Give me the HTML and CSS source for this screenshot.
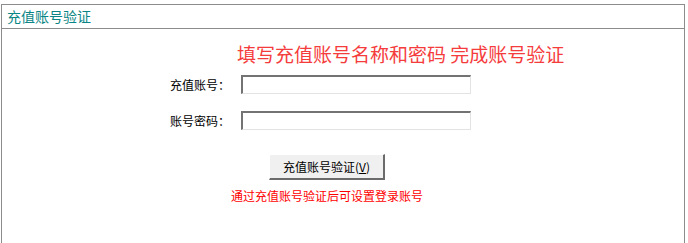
FILE: index.html
```html
<!DOCTYPE html>
<html>
<head>
  <meta charset="utf-8">
  <title>充值账号验证</title>
  <link rel="stylesheet" href="styles.css">
</head>
<body>

<div class="panel">
  <div class="panel-title">充值账号验证</div>
  <div class="panel-body">
    <h2 class="tip">填写充值账号名称和密码 完成账号验证</h2>

    <form class="verify-form" onsubmit="return false;">
      <div class="form-row">
        <label for="account">充值账号：</label>
        <input type="text" id="account">
      </div>
      <div class="form-row second">
        <label for="password">账号密码：</label>
        <input type="password" id="password">
      </div>
      <div class="actions">
        <button type="submit" accesskey="v">充值账号验证(<u>V</u>)</button>
      </div>
      <p class="note">通过充值账号验证后可设置登录账号</p>
    </form>
  </div>
</div>

</body>
</html>
```

FILE: styles.css
```css
body {
  margin: 0;
  background-color: #fff;
  font-family: "Noto Sans CJK SC", "Noto Sans", sans-serif;
  font-size: 12px;
}

.panel {
  margin: 4px 0 0 1px;
  width: 684px;
  height: 239px;
  box-sizing: border-box;
  border: 1px solid #8c8c8c;
  border-bottom: none;
}

.panel-title {
  height: 23px;
  line-height: 22px;
  padding-left: 5px;
  font-size: 14px;
  color: #0a8585;
  border-bottom: 1px solid #8c8c8c;
}

.panel-body {
  padding-top: 13px;
}

.tip {
  margin: 0 0 9px 235px;
  font-size: 19px;
  font-weight: normal;
  line-height: 24px;
  color: #f53c3c;
}

.form-row {
  display: flex;
  align-items: center;
  height: 19px;
}

.form-row.second {
  margin-top: 17px;
}

.form-row label {
  width: 228px;
  margin-right: 11px;
  text-align: right;
  color: #000;
}

.form-row input {
  width: 230px;
  height: 19px;
  box-sizing: border-box;
  padding: 0 2px;
  border-style: solid;
  border-width: 2px 1px 1px 2px;
  border-color: #737373 #e3e3e3 #e3e3e3 #737373;
  font-size: 12px;
  outline: none;
}

.actions {
  margin: 24px 0 0 267px;
}

.actions button {
  width: 116px;
  height: 26px;
  padding: 0;
  background-color: #f0f0f0;
  border-style: solid;
  border-width: 1px 2px 2px 1px;
  border-color: #fff #6b6b6b #6b6b6b #fff;
  font-family: inherit;
  font-size: 12px;
  color: #000;
}

.note {
  margin: 8px 0 0 229px;
  line-height: 16px;
  color: #f00;
}
```
